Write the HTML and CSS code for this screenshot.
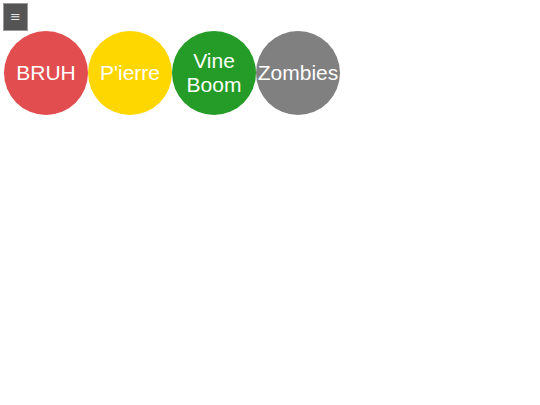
FILE: index.html
```html
<!DOCTYPE html>
<html>
<head>
<meta charset="utf-8">
<link rel="stylesheet" href="styles.css">
</head>
<body>
<button class="menu-btn">≡</button>
<div class="sounds">
  <div class="sound red">BRUH</div>
  <div class="sound yellow">P'ierre</div>
  <div class="sound green">Vine Boom</div>
  <div class="sound gray">Zombies</div>
</div>
</body>
</html>
```
FILE: styles.css
```css
html, body {
  margin: 0;
  background: #ffffff;
}
body {
  padding: 3px;
  font-family: "Liberation Sans", Arial, sans-serif;
}
.menu-btn {
  display: block;
  box-sizing: border-box;
  width: 25px;
  height: 28px;
  margin: 0;
  padding: 0;
  background: #555555;
  border: 1px solid #9a9a9a;
  color: #e6e6e6;
  font-family: "DejaVu Sans", sans-serif;
  font-size: 13px;
  line-height: 26px;
  text-align: center;
}
.sounds {
  display: flex;
  margin-left: 1px;
}
.sound {
  width: 84px;
  height: 84px;
  border-radius: 50%;
  display: flex;
  align-items: center;
  justify-content: center;
  text-align: center;
  color: #ffffff;
  font-size: 21px;
  line-height: 24px;
  flex: none;
}
.red { background: #e24d4f; }
.yellow { background: #ffd700; }
.green { background: #249c27; }
.gray { background: #808080; }
```
